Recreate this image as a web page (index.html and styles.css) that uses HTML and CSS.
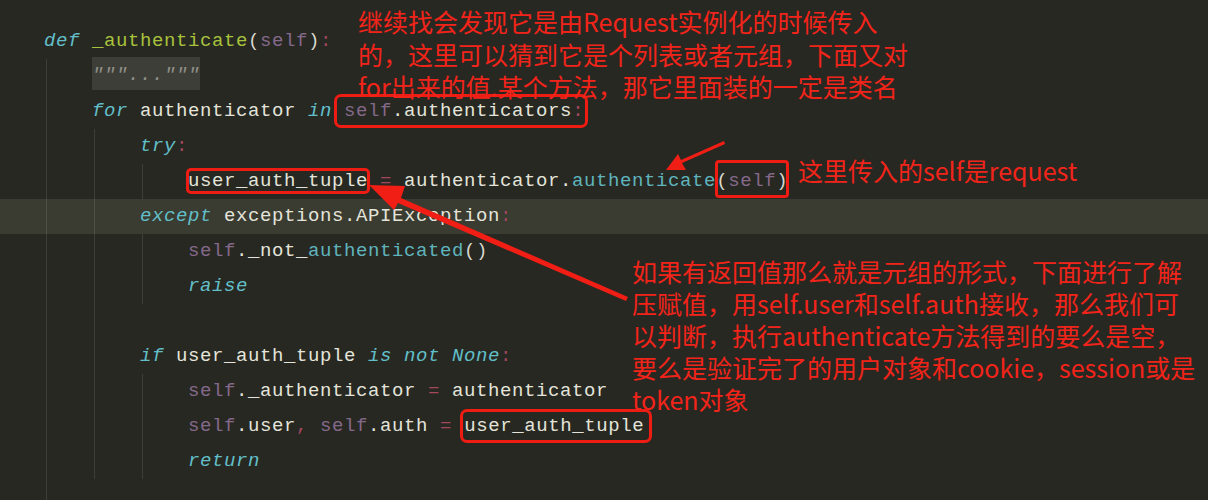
FILE: index.html
```html
<!DOCTYPE html>
<html>

<head>
    <title>authenticate</title>
    <link rel="stylesheet" href="styles.css">
</head>

<body>
    <div class="editor">
        <div class="line"><span class="kw">def</span> <span class="fn">_authenticate</span><span class="pn">(</span><span class="slf">self</span><span class="pn">)</span><span class="op">:</span></div>
        <div class="block">
            <div class="line"><span class="fold">"""..."""</span></div>
            <div class="line"><span class="kw">for</span> authenticator <span class="kw">in</span> <span class="box box-for"><span class="slf">self</span>.authenticators<span class="op">:</span></span></div>
            <div class="block">
                <div class="line"><span class="kw">try</span><span class="op">:</span></div>
                <div class="block">
                    <div class="line"><span class="box box-var">user_auth_tuple</span> <span class="op">=</span> authenticator.<span class="call">authenticate</span><span class="box box-arg"><span class="pn">(</span><span class="slf">self</span><span class="pn">)</span></span></div>
                </div>
                <div class="line current"><span class="kw">except</span> exceptions.APIException<span class="op">:</span></div>
                <div class="block">
                    <div class="line"><span class="slf">self</span>._not_<span class="call">authenticated</span><span class="pn">()</span></div>
                    <div class="line"><span class="kw">raise</span></div>
                </div>
                <div class="line"></div>
                <div class="line"><span class="kw">if</span> user_auth_tuple <span class="kw">is not None</span><span class="op">:</span></div>
                <div class="block">
                    <div class="line"><span class="slf">self</span>._authenticator <span class="op">=</span> authenticator</div>
                    <div class="line"><span class="slf">self</span>.user<span class="op">,</span> <span class="slf">self</span>.auth <span class="op">=</span> <span class="box box-tuple">user_auth_tuple</span></div>
                    <div class="line"><span class="kw">return</span></div>
                </div>
            </div>
            <div class="line"></div>
        </div>

        <div class="note note-top">继续找会发现它是由Request实例化的时候传入<br>的，这里可以猜到它是个列表或者元组，下面又对<br>for出来的值.某个方法，那它里面装的一定是类名</div>
        <div class="note note-self">这里传入的self是request</div>
        <div class="note note-tuple">如果有返回值那么就是元组的形式，下面进行了解<br>压赋值，用self.user和self.auth接收，那么我们可<br>以判断，执行authenticate方法得到的要么是空，<br>要么是验证完了的用户对象和cookie，session或是<br>token对象</div>

        <svg class="arrows" width="1208" height="500" viewBox="0 0 1208 500">
            <!-- short arrow to authenticate -->
            <polygon points="724,141 725,144 682,163 686,170 666,170 678,154 681,160" fill="#f01e14" />
            <!-- long arrow to user_auth_tuple -->
            <polygon points="628,297 626,301 398,203 394,210 369,185 405,186 401,198" fill="#f01e14" />
        </svg>
    </div>
</body>

</html>
```

FILE: styles.css
```css
body {
    margin: 0;
    background: #272822;
}

.editor {
    position: relative;
    height: 500px;
    overflow: hidden;
    box-sizing: border-box;
    padding: 24px 0 0 44px;
    font-family: "Liberation Mono", monospace;
    font-size: 19px;
    line-height: 35px;
    letter-spacing: 0.6px;
    color: #e4e4da;
}

.line {
    height: 35px;
    white-space: pre;
}

.line.current {
    margin-left: -200px;
    padding-left: 200px;
    background: rgba(255, 255, 215, 0.09);
}

.block {
    margin-left: 2px;
    border-left: 1px solid #3e3e37;
    padding-left: 45px;
}

.kw {
    color: #62bfc9;
    font-style: italic;
}

.fn {
    color: #a9c23c;
}

.slf {
    color: #85698a;
}

.pn {
    color: #d8d8ce;
}

.op {
    color: #a4475f;
}

.call {
    color: #5fb4bd;
}

.fold {
    display: inline-block;
    height: 33px;
    background: #3e3e39;
    color: #8f8f86;
    font-style: italic;
    vertical-align: top;
    margin-top: -2px;
    line-height: 37px;
}

.box {
    outline: 3px solid #ee1c12;
    border-radius: 3px;
    outline-offset: 1px;
    padding: 2px 0;
}

.box-for {
    margin-left: -6px;
    padding-left: 6px;
}

.box-var {
    padding: 0;
    outline-offset: -1px;
}

.box-arg {
    padding: 9px 0 5px;
    outline-offset: -2px;
}

.box-tuple {
    padding-right: 4px;
}

.note {
    position: absolute;
    font-family: "Noto Sans CJK SC", sans-serif;
    font-size: 25px;
    line-height: 33px;
    letter-spacing: 0;
    color: #f2241a;
    white-space: nowrap;
}

.note-top {
    left: 358px;
    top: 5px;
    line-height: 32.5px;
}

.note-self {
    left: 798px;
    top: 154px;
}

.note-tuple {
    left: 632px;
    top: 255px;
    line-height: 32px;
}

.arrows {
    position: absolute;
    left: 0;
    top: 0;
    pointer-events: none;
}
```
